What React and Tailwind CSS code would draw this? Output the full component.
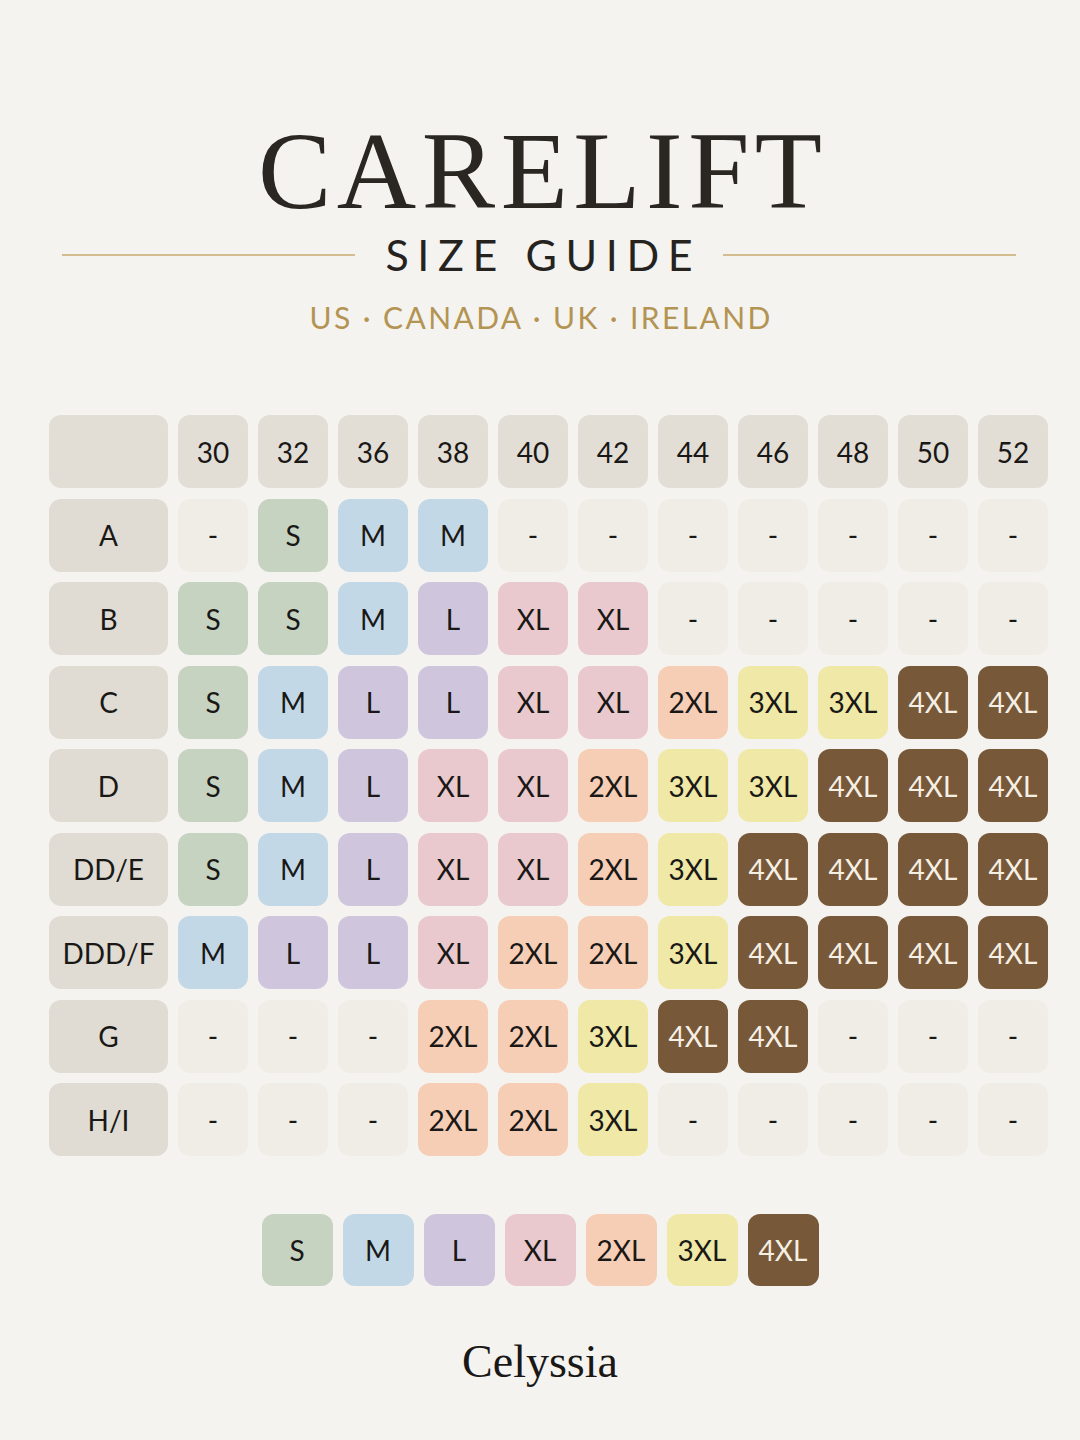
const COLS = ['30', '32', '36', '38', '40', '42', '44', '46', '48', '50', '52'];

const ROWS = [
  ['A', ['-', 'S', 'M', 'M', '-', '-', '-', '-', '-', '-', '-']],
  ['B', ['S', 'S', 'M', 'L', 'XL', 'XL', '-', '-', '-', '-', '-']],
  ['C', ['S', 'M', 'L', 'L', 'XL', 'XL', '2XL', '3XL', '3XL', '4XL', '4XL']],
  ['D', ['S', 'M', 'L', 'XL', 'XL', '2XL', '3XL', '3XL', '4XL', '4XL', '4XL']],
  ['DD/E', ['S', 'M', 'L', 'XL', 'XL', '2XL', '3XL', '4XL', '4XL', '4XL', '4XL']],
  ['DDD/F', ['M', 'L', 'L', 'XL', '2XL', '2XL', '3XL', '4XL', '4XL', '4XL', '4XL']],
  ['G', ['-', '-', '-', '2XL', '2XL', '3XL', '4XL', '4XL', '-', '-', '-']],
  ['H/I', ['-', '-', '-', '2XL', '2XL', '3XL', '-', '-', '-', '-', '-']],
];

const SIZE_STYLE = {
  '-': 'bg-[#efede5] text-[#1a1816]',
  S: 'bg-[#c5d3c0] text-[#1a1816]',
  M: 'bg-[#c3d8e7] text-[#1a1816]',
  L: 'bg-[#cfc6de] text-[#1a1816]',
  XL: 'bg-[#e9c9cd] text-[#1a1816]',
  '2XL': 'bg-[#f6ceb6] text-[#1a1816]',
  '3XL': 'bg-[#efe8a6] text-[#1a1816]',
  '4XL': 'bg-[#775839] text-[#f5efe4]',
};

const LEGEND = ['S', 'M', 'L', 'XL', '2XL', '3XL', '4XL'];

function Cell({ children, className = '' }) {
  return (
    <div className={`h-[73px] rounded-[12px] flex items-center justify-center text-[28px] ${className}`}>
      {children}
    </div>
  );
}

export default function App() {
  return (
    <div className="w-[1080px] h-[1440px] bg-[#f4f3ef] font-['Lato',sans-serif] overflow-hidden">
      {/* Title */}
      <div className="pt-[116px] text-center">
        <h1 className="font-['Liberation_Serif',serif] text-[110px] leading-none tracking-[0.05em] pl-[0.05em] text-[#2a2622]">
          CARELIFT
        </h1>
      </div>

      <div className="mt-[7px] flex items-center pl-[62px] pr-[64px] gap-[22px]">
        <div className="flex-1 h-[2px] bg-[#d2bd8e]" />
        <div className="text-[43px] leading-none tracking-[0.2em] pl-[0.2em] text-[#26231f]">SIZE GUIDE</div>
        <div className="flex-1 h-[2px] bg-[#d2bd8e]" />
      </div>

      <div className="mt-[26px] text-center text-[30px] leading-none tracking-[0.08em] pl-[0.08em] text-[#b39452]">
        US · CANADA · UK · IRELAND
      </div>

      {/* Chart */}
      <div className="mt-[83px] ml-[49px] grid grid-cols-[119px_repeat(11,70px)] gap-x-[10px] gap-y-[10.5px]">
        <Cell className="bg-[#e2ded5]" />
        {COLS.map((c) => (
          <Cell key={c} className="bg-[#e2ded5] text-[#1a1816]">{c}</Cell>
        ))}
        {ROWS.map(([label, sizes]) => (
          <>
            <Cell key={label} className="bg-[#e0dcd3] text-[#1a1816]">{label}</Cell>
            {sizes.map((s, i) => (
              <Cell key={label + i} className={SIZE_STYLE[s]}>{s}</Cell>
            ))}
          </>
        ))}
      </div>

      {/* Legend */}
      <div className="mt-[58px] flex justify-center gap-[10px]">
        {LEGEND.map((s) => (
          <div key={s} className={`w-[71px] h-[72px] rounded-[12px] flex items-center justify-center text-[28px] ${SIZE_STYLE[s]}`}>
            {s}
          </div>
        ))}
      </div>

      <div className="mt-[53px] text-center font-['Liberation_Serif',serif] text-[46px] leading-none text-[#1a1816]">
        Celyssia
      </div>
    </div>
  );
}
